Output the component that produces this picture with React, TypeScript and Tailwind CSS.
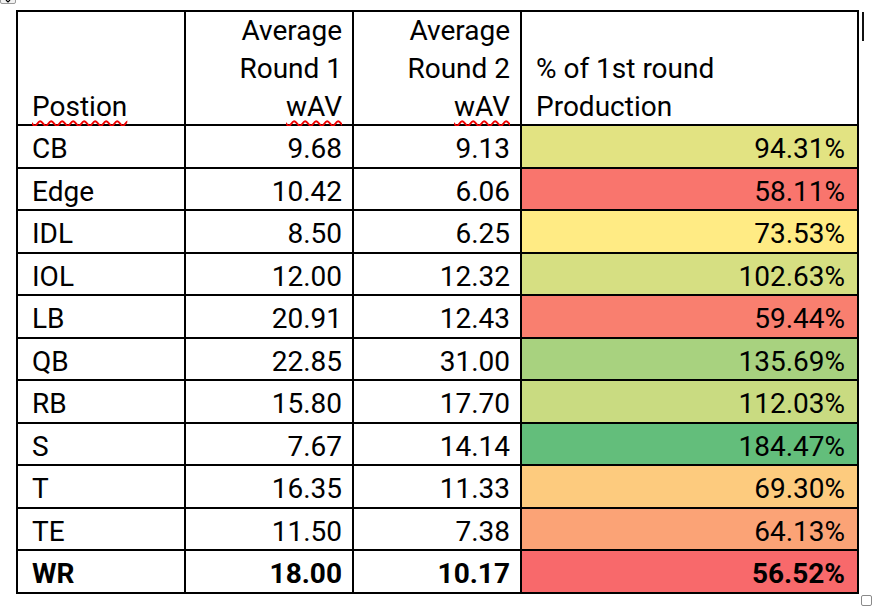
import React from "react";

type Row = {
  pos: string;
  r1: string;
  r2: string;
  pct: string;
  color: string;
  bold?: boolean;
};

// Excel-style 3 colour scale (red -> yellow -> green), median at IDL
const rows: Row[] = [
  { pos: "CB", r1: "9.68", r2: "9.13", pct: "94.31%", color: "#E2E382" },
  { pos: "Edge", r1: "10.42", r2: "6.06", pct: "58.11%", color: "#F9756D" },
  { pos: "IDL", r1: "8.50", r2: "6.25", pct: "73.53%", color: "#FFEB84" },
  { pos: "IOL", r1: "12.00", r2: "12.32", pct: "102.63%", color: "#D6DF82" },
  { pos: "LB", r1: "20.91", r2: "12.43", pct: "59.44%", color: "#F97F6F" },
  { pos: "QB", r1: "22.85", r2: "31.00", pct: "135.69%", color: "#A8D27F" },
  { pos: "RB", r1: "15.80", r2: "17.70", pct: "112.03%", color: "#C9DB81" },
  { pos: "S", r1: "7.67", r2: "14.14", pct: "184.47%", color: "#63BE7B" },
  { pos: "T", r1: "16.35", r2: "11.33", pct: "69.30%", color: "#FDCB7E" },
  { pos: "TE", r1: "11.50", r2: "7.38", pct: "64.13%", color: "#FBA376" },
  { pos: "WR", r1: "18.00", r2: "10.17", pct: "56.52%", color: "#F8696B", bold: true },
];

const squiggle =
  "underline decoration-wavy decoration-[#f00000] decoration-[1.5px] underline-offset-[4px]";

export default function App() {
  return (
    <div className="relative w-[874px] h-[614px] bg-white font-[Roboto,sans-serif] text-[28px] text-black pt-[10px] pl-[16px]">
      {/* table move handle */}
      <div className="absolute left-0 top-[-12px] w-[16px] h-[16px] border border-[#9a9a9a] bg-[#f2f2f2] rounded-[2px]">
        <svg width="14" height="14" viewBox="0 0 14 14" className="block">
          <path d="M7 3v8M3 7h8" stroke="#000" strokeWidth="1.5" fill="none" />
          <path d="M5 11l2 2 2-2" stroke="#000" strokeWidth="1.2" fill="none" />
        </svg>
      </div>

      <div className="grid w-fit grid-cols-[166px_166px_166px_335px] grid-rows-[112px_41px_40px_41px_40px_41px_40px_41px_40px_41px_40px_41px] gap-[2px] bg-black p-[2px]">
        {/* header */}
        <div className="bg-white pl-[14px] pt-[76px] leading-[38px]">
          <span className={squiggle}>Postion</span>
        </div>
        <div className="bg-white pr-[10px] text-right leading-[38px]">
          <span className="block">Average</span>
          <span className="block">Round 1</span>
          <span className={`block ${squiggle}`}>wAV</span>
        </div>
        <div className="bg-white pr-[10px] text-right leading-[38px]">
          <span className="block">Average</span>
          <span className="block">Round 2</span>
          <span className={`block ${squiggle}`}>wAV</span>
        </div>
        <div className="bg-white pl-[14px] pt-[38px] leading-[38px]">
          <span className="block">% of 1st round</span>
          <span className="block">Production</span>
        </div>

        {rows.map((r) => (
          <React.Fragment key={r.pos}>
            <div className={`bg-white pl-[14px] pt-[6px] leading-[34px] ${r.bold ? "font-bold" : ""}`}>
              {r.pos}
            </div>
            <div className={`bg-white pr-[10px] pt-[6px] leading-[34px] text-right ${r.bold ? "font-bold" : ""}`}>
              {r.r1}
            </div>
            <div className={`bg-white pr-[10px] pt-[6px] leading-[34px] text-right ${r.bold ? "font-bold" : ""}`}>
              {r.r2}
            </div>
            <div
              className={`pr-[12px] pt-[6px] leading-[34px] text-right ${r.bold ? "font-bold" : ""}`}
              style={{ backgroundColor: r.color }}
            >
              {r.pct}
            </div>
          </React.Fragment>
        ))}
      </div>

      {/* text caret */}
      <div className="absolute left-[862px] top-[12px] w-[2px] h-[29px] bg-[#111]" />
      {/* resize handle */}
      <div className="absolute left-[861px] top-[595px] w-[11px] h-[11px] border border-[#8a8a8a] rounded-[2px] bg-white" />
    </div>
  );
}
